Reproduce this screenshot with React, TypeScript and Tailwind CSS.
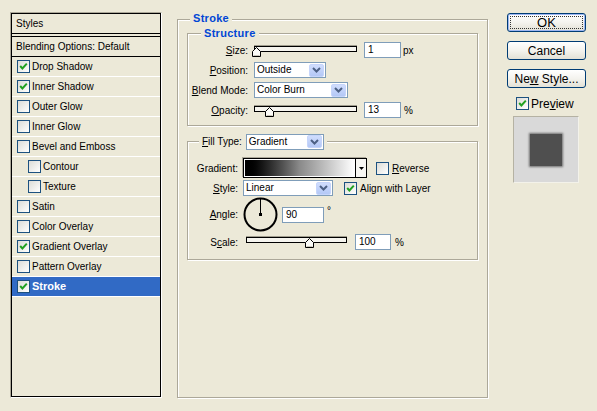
import React from "react";

type Effect = { label: string; checked?: boolean; indent?: boolean; selected?: boolean };

const effects: Effect[] = [
  { label: "Drop Shadow", checked: true },
  { label: "Inner Shadow", checked: true },
  { label: "Outer Glow" },
  { label: "Inner Glow" },
  { label: "Bevel and Emboss" },
  { label: "Contour", indent: true },
  { label: "Texture", indent: true },
  { label: "Satin" },
  { label: "Color Overlay" },
  { label: "Gradient Overlay", checked: true },
  { label: "Pattern Overlay" },
  { label: "Stroke", checked: true, selected: true },
];

function CheckBox({ checked }: { checked?: boolean }) {
  return (
    <span className="w-[13px] h-[13px] shrink-0 border border-[#1c5180] bg-gradient-to-br from-[#dcdcd7] to-white flex items-center justify-center">
      {checked && (
        <svg width="11" height="11" viewBox="0 0 11 11">
          <path d="M2.2 5 L4.4 7.4 L8.8 2.6" fill="none" stroke="#21a121" strokeWidth="2" />
        </svg>
      )}
    </span>
  );
}

function ComboArrow() {
  return (
    <span className="w-[15px] h-[13px] shrink-0 rounded-[2px] border border-[#c6d5fb] bg-gradient-to-b from-[#d0ddfd] to-[#b4c8f6] flex items-center justify-center">
      <svg width="9" height="6" viewBox="0 0 9 6">
        <path d="M1 1 L4.5 4.5 L8 1" fill="none" stroke="#4d6185" strokeWidth="2" />
      </svg>
    </span>
  );
}

function Combo({ value, className }: { value: string; className: string }) {
  return (
    <div className={`h-[16px] flex items-center bg-white border border-[#7f9db9] pl-[2px] pr-px ${className}`}>
      <span className="flex-1 leading-none">{value}</span>
      <ComboArrow />
    </div>
  );
}

function Field({ value, className }: { value: string; className: string }) {
  return (
    <div className={`h-[16px] shrink-0 flex items-center bg-white border border-[#7f9db9] pl-[3px] leading-none ${className}`}>
      {value}
    </div>
  );
}

function Slider({
  value,
  min,
  max,
  span,
  className,
  trackClass,
  thumbClass,
}: {
  value: number;
  min: number;
  max: number;
  span: number;
  className: string;
  trackClass: string;
  thumbClass: string;
}) {
  const left = -2 + ((value - min) / (max - min)) * span;
  return (
    <div className={`relative h-[16px] shrink-0 ${className}`}>
      <div className={`h-[6px] border border-black bg-[#f5f4ee] shadow-[0_-1px_0_#a09d8e] ${trackClass}`} />
      <svg className={`absolute ${thumbClass}`} style={{ left }} width="9" height="10" viewBox="0 0 9 10">
        <polygon points="0.5,9.5 0.5,4.5 4.5,0.5 8.5,4.5 8.5,9.5" fill="#fbfbf7" stroke="#000" />
        <line x1="1.5" y1="8.5" x2="7.5" y2="8.5" stroke="#c9c6b8" />
      </svg>
    </div>
  );
}

function U({ children }: { children: React.ReactNode }) {
  return <span className="underline underline-offset-[1px]">{children}</span>;
}

function Button({ children, primary }: { children: React.ReactNode; primary?: boolean }) {
  return (
    <div
      className={`relative h-[19px] w-[79px] rounded-[3px] border border-[#003c74] bg-gradient-to-b from-white via-[#f4f3ee] to-[#e3e1d6] flex items-center justify-center text-black ${
        primary ? "shadow-[inset_0_0_0_1px_#9db6f2] text-[13px]" : "text-[12px]"
      }`}
    >
      {primary && <span className="absolute inset-[2px] border border-dotted border-[#333]" />}
      <span className="relative leading-none">{children}</span>
    </div>
  );
}

function Group({
  legend,
  className,
  legendClass,
  children,
}: {
  legend: React.ReactNode;
  className: string;
  legendClass: string;
  children: React.ReactNode;
}) {
  return (
    <div className={`relative border border-[#aca899] shadow-[inset_1px_1px_0_#fff,1px_1px_0_#fff] ${className}`}>
      <div className={`absolute bg-[#ece9d8] px-[3px] ${legendClass}`}>{legend}</div>
      {children}
    </div>
  );
}

export default function App() {
  return (
    <div className="w-[597px] h-[411px] bg-[#ece9d8] flex items-start text-black text-[10px] font-['Liberation_Sans',Arial,sans-serif] overflow-hidden">
      {/* effect list */}
      <div className="ml-[10px] mt-[12px] w-[152px] h-[386px] border border-t-[#aca899] border-l-[#aca899] border-r-white border-b-white">
        <div className="h-full border border-black flex flex-col">
          <div className="h-[20px] shrink-0 border-b border-black pl-[4px] flex items-center">Styles</div>
          <div className="h-[2px] shrink-0" />
          <div className="h-[21px] shrink-0 border-y border-black pl-[4px] flex items-center">Blending Options: Default</div>
          {effects.map((e) => (
            <div
              key={e.label}
              className={`h-[20px] shrink-0 border-b border-white flex items-center gap-[2px] ${
                e.indent ? "pl-[16px]" : "pl-[5px]"
              } ${e.selected ? "bg-[#316ac5] text-white font-bold text-[11px]" : ""}`}
            >
              <CheckBox checked={e.checked} />
              <span className="leading-none">{e.label}</span>
            </div>
          ))}
        </div>
      </div>

      {/* stroke settings */}
      <Group
        className="ml-[15px] mt-[19px] w-[311px] h-[379px] pl-[9px] pt-[13px]"
        legendClass="left-[12px] top-[-9px] h-[14px] flex items-center"
        legend={<span className="text-[11px] font-bold text-[#0046d5] tracking-[0.3px]">Stroke</span>}
      >
        <Group
          className="w-[291px] h-[93px] pt-[8px]"
          legendClass="left-[13px] top-[-8px] h-[14px] flex items-center"
          legend={<span className="text-[11px] font-bold text-[#0046d5] tracking-[0.3px]">Structure</span>}
        >
          <div className="flex flex-col gap-[4px]">
            <div className="h-[16px] flex items-center">
              <span className="w-[60px] text-right">
                <U>S</U>ize:
              </span>
              <Slider value={1} min={1} max={250} span={98} className="ml-[6px] w-[103px]" trackClass="mt-[4px]" thumbClass="top-[5px]" />
              <Field value="1" className="ml-[7px] w-[37px]" />
              <span className="ml-[2px]">px</span>
            </div>
            <div className="h-[16px] flex items-center">
              <span className="w-[60px] text-right">
                <U>P</U>osition:
              </span>
              <Combo value="Outside" className="ml-[6px] w-[72px]" />
            </div>
            <div className="h-[16px] flex items-center">
              <span className="w-[60px] text-right">
                <U>B</U>lend Mode:
              </span>
              <Combo value="Color Burn" className="ml-[6px] w-[94px]" />
            </div>
            <div className="h-[16px] flex items-center">
              <span className="w-[60px] text-right">
                <U>O</U>pacity:
              </span>
              <Slider value={13} min={0} max={100} span={98} className="ml-[6px] w-[103px]" trackClass="mt-[4px]" thumbClass="top-[5px]" />
              <Field value="13" className="ml-[7px] w-[37px]" />
              <span className="ml-[3px]">%</span>
            </div>
          </div>
        </Group>

        <Group
          className="mt-[15px] w-[291px] h-[119px] pt-[16px]"
          legendClass="left-[11px] top-[-8px] h-[15px] flex items-center gap-[4px]"
          legend={
            <>
              <span>
                <U>F</U>ill Type:
              </span>
              <Combo value="Gradient" className="w-[78px] h-[15px]" />
            </>
          }
        >
          <div className="flex flex-col">
            <div className="h-[20px] flex items-center">
              <span className="w-[50px] text-right">Gradient:</span>
              <div className="ml-[5px] w-[124px] h-[20px] border border-black flex shadow-[-1px_-1px_0_#aca899]">
                <div className="flex-1 border border-white bg-gradient-to-r from-black via-[#8a8a8a] to-white" />
                <div className="w-[11px] border-l border-black bg-[#f7f6f2] flex items-center justify-center">
                  <svg width="5" height="3" viewBox="0 0 5 3">
                    <polygon points="0,0 5,0 2.5,3" fill="#000" />
                  </svg>
                </div>
              </div>
              <span className="ml-[9px]">
                <CheckBox />
              </span>
              <span className="ml-[3px]">
                <U>R</U>everse
              </span>
            </div>
            <div className="mt-[2px] h-[16px] flex items-center">
              <span className="w-[50px] text-right">
                <U>S</U>tyle:
              </span>
              <Combo value="Linear" className="ml-[5px] w-[90px]" />
              <span className="ml-[11px]">
                <CheckBox checked />
              </span>
              <span className="ml-[3px]">Align with Layer</span>
            </div>
            <div className="mt-[1px] h-[35px] flex items-center">
              <span className="w-[50px] text-right">
                <U>A</U>ngle:
              </span>
              <svg className="ml-[5px] shrink-0" width="35" height="35" viewBox="0 0 35 35">
                <circle cx="17.5" cy="17.5" r="16" fill="none" stroke="#000" strokeWidth="2" />
                <line x1="17.5" y1="17.5" x2="17.5" y2="2" stroke="#000" strokeWidth="1" />
                <rect x="16" y="16" width="3" height="3" fill="#000" />
              </svg>
              <Field value="90" className="ml-[4px] w-[42px]" />
              <span className="ml-[3px] self-start mt-[9px] leading-none">°</span>
            </div>
            <div className="mt-[2px] h-[16px] flex items-center">
              <span className="w-[50px] text-right">
                S<U>c</U>ale:
              </span>
              <Slider value={100} min={10} max={150} span={95} className="ml-[8px] w-[101px]" trackClass="mt-[3px]" thumbClass="top-[4px]" />
              <Field value="100" className="ml-[8px] w-[36px]" />
              <span className="ml-[4px]">%</span>
            </div>
          </div>
        </Group>
      </Group>

      {/* dialog buttons */}
      <div className="ml-[19px] mt-[13px] w-[79px] flex flex-col">
        <Button primary>OK</Button>
        <div className="mt-[9px]">
          <Button>Cancel</Button>
        </div>
        <div className="mt-[9px]">
          <Button>
            Ne<U>w</U> Style...
          </Button>
        </div>
        <div className="mt-[9px] ml-[9px] flex items-center gap-[2px] text-[12px] h-[13px]">
          <CheckBox checked />
          <span className="leading-none">
            Pre<U>v</U>iew
          </span>
        </div>
        <div className="mt-[6px] ml-[6px] w-[66px] h-[67px] bg-[#d9d9d9] border border-t-[#b5b2a3] border-l-[#b5b2a3] border-r-[#f3f2ea] border-b-[#f3f2ea] flex items-center justify-center">
          <div className="w-[32px] h-[32px] bg-[#4f4f4f] shadow-[0_0_2px_1px_#6e6e6e]" />
        </div>
      </div>
    </div>
  );
}
